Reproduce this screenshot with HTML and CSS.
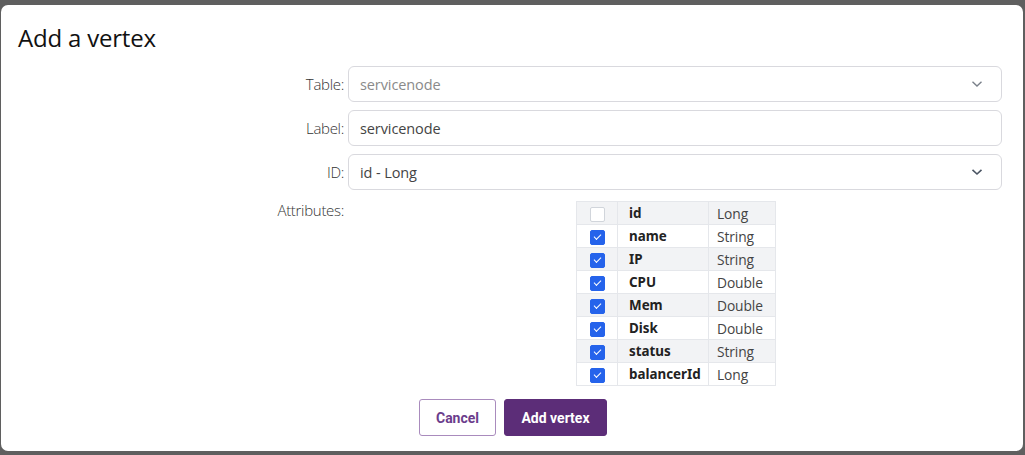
FILE: index.html
```html
<!DOCTYPE html>
<html>
<head>
<meta charset="utf-8">
<link rel="stylesheet" href="styles.css">
</head>
<body>
<div class="modal">
  <h1 class="title">Add a vertex</h1>
  <div class="form">
    <label class="lbl">Table:</label>
    <div class="field select muted"><span>servicenode</span>
      <svg class="chev" width="12" height="8" viewBox="0 0 12 8"><path d="M1.5 1.8 L6 6 L10.5 1.8" fill="none" stroke="#7a808a" stroke-width="1.4"/></svg>
    </div>
    <label class="lbl">Label:</label>
    <div class="field"><span>servicenode</span></div>
    <label class="lbl">ID:</label>
    <div class="field select"><span>id - Long</span>
      <svg class="chev" width="12" height="8" viewBox="0 0 12 8"><path d="M1.5 1.8 L6 6 L10.5 1.8" fill="none" stroke="#4b5563" stroke-width="1.6"/></svg>
    </div>
    <label class="lbl attr">Attributes:</label>
    <div class="tablewrap">
      <table class="attrs">
        <tr><td class="cb"><span class="box"></span></td><td class="nm">id</td><td class="tp">Long</td></tr>
        <tr><td class="cb"><span class="box on"></span></td><td class="nm">name</td><td class="tp">String</td></tr>
        <tr><td class="cb"><span class="box on"></span></td><td class="nm">IP</td><td class="tp">String</td></tr>
        <tr><td class="cb"><span class="box on"></span></td><td class="nm">CPU</td><td class="tp">Double</td></tr>
        <tr><td class="cb"><span class="box on"></span></td><td class="nm">Mem</td><td class="tp">Double</td></tr>
        <tr><td class="cb"><span class="box on"></span></td><td class="nm">Disk</td><td class="tp">Double</td></tr>
        <tr><td class="cb"><span class="box on"></span></td><td class="nm">status</td><td class="tp">String</td></tr>
        <tr><td class="cb"><span class="box on"></span></td><td class="nm">balancerId</td><td class="tp">Long</td></tr>
      </table>
    </div>
  </div>
  <div class="actions">
    <button class="btn cancel">Cancel</button>
    <button class="btn primary">Add vertex</button>
  </div>
</div>
</body>
</html>
```
FILE: styles.css
```css
html, body {
  margin: 0;
  padding: 0;
  background: #5f5f5f;
  width: 1025px;
  height: 455px;
  overflow: hidden;
}
body {
  padding-top: 5px;
  font-family: "Open Sans", "Noto Sans", sans-serif;
}
.modal {
  margin-left: 1px;
  width: 1022px;
  height: 446px;
  box-sizing: border-box;
  background: #fff;
  border-radius: 7px;
  padding: 0 21px 0 17px;
}
.title {
  margin: 0;
  padding-top: 18px;
  height: 43px;
  box-sizing: border-box;
  font-size: 24px;
  font-weight: 400;
  color: #111;
  line-height: 30px;
  letter-spacing: -0.2px;
}
.form {
  display: grid;
  grid-template-columns: 326px 654px;
  column-gap: 4px;
  row-gap: 8px;
  margin-top: 18px;
}
.lbl {
  text-align: right;
  font-size: 15px;
  font-weight: 300;
  color: #333;
  line-height: 36px;
  letter-spacing: -0.3px;
}
.lbl.attr {
  line-height: 20px;
  padding-top: 2px;
}
.field {
  height: 36px;
  box-sizing: border-box;
  border: 1px solid #d9d9de;
  border-radius: 6px;
  display: flex;
  align-items: center;
  justify-content: space-between;
  padding: 0 18px 0 11px;
  font-size: 14.5px;
  color: #444;
  letter-spacing: -0.1px;
}
.field.muted { color: #8a8a8a; }
.chev { display: block; }
.tablewrap {
  display: flex;
  justify-content: center;
  padding-top: 3px;
  padding-left: 2px;
}
.attrs {
  border-collapse: collapse;
  font-size: 13.8px;
}
.attrs td {
  border: 1px solid #e5e7eb;
  height: 23px;
  padding: 0;
  box-sizing: border-box;
}
.attrs tr:nth-child(odd) td { background: #f2f3f5; }
.attrs td.cb {
  width: 41px;
  text-align: center;
}
.attrs td.nm {
  width: 91px;
  padding-left: 11px;
  font-weight: 700;
  color: #222;
  font-family: "Noto Sans", "Open Sans", sans-serif;
  font-size: 13.4px;
}
.attrs td.tp {
  width: 67px;
  padding-left: 8px;
  color: #444;
  letter-spacing: -0.1px;
}
.box {
  display: inline-block;
  width: 15px;
  height: 15px;
  box-sizing: border-box;
  border: 1px solid #d1d5db;
  background: #fff;
  border-radius: 2px;
  vertical-align: middle;
  position: relative;
}
.box.on {
  background: #2563eb;
  border-color: #2563eb;
}
.box.on::after {
  content: "";
  position: absolute;
  left: 3.5px;
  top: 3px;
  width: 6px;
  height: 3px;
  border-left: 1.8px solid #fff;
  border-bottom: 1.8px solid #fff;
  transform: rotate(-45deg);
}
.actions {
  display: flex;
  justify-content: center;
  gap: 8px;
  margin-top: 13px;
  padding-left: 6px;
}
.btn {
  height: 37px;
  border-radius: 3px;
  font-family: Roboto, "Liberation Sans", sans-serif;
  font-weight: 700;
  font-size: 14px;
  cursor: pointer;
}
.cancel {
  width: 77px;
  background: #fff;
  border: 1px solid #a98bbd;
  color: #6b3d8c;
}
.primary {
  width: 103px;
  background: #5c2d78;
  border: 1px solid #5c2d78;
  color: #fff;
}
```
